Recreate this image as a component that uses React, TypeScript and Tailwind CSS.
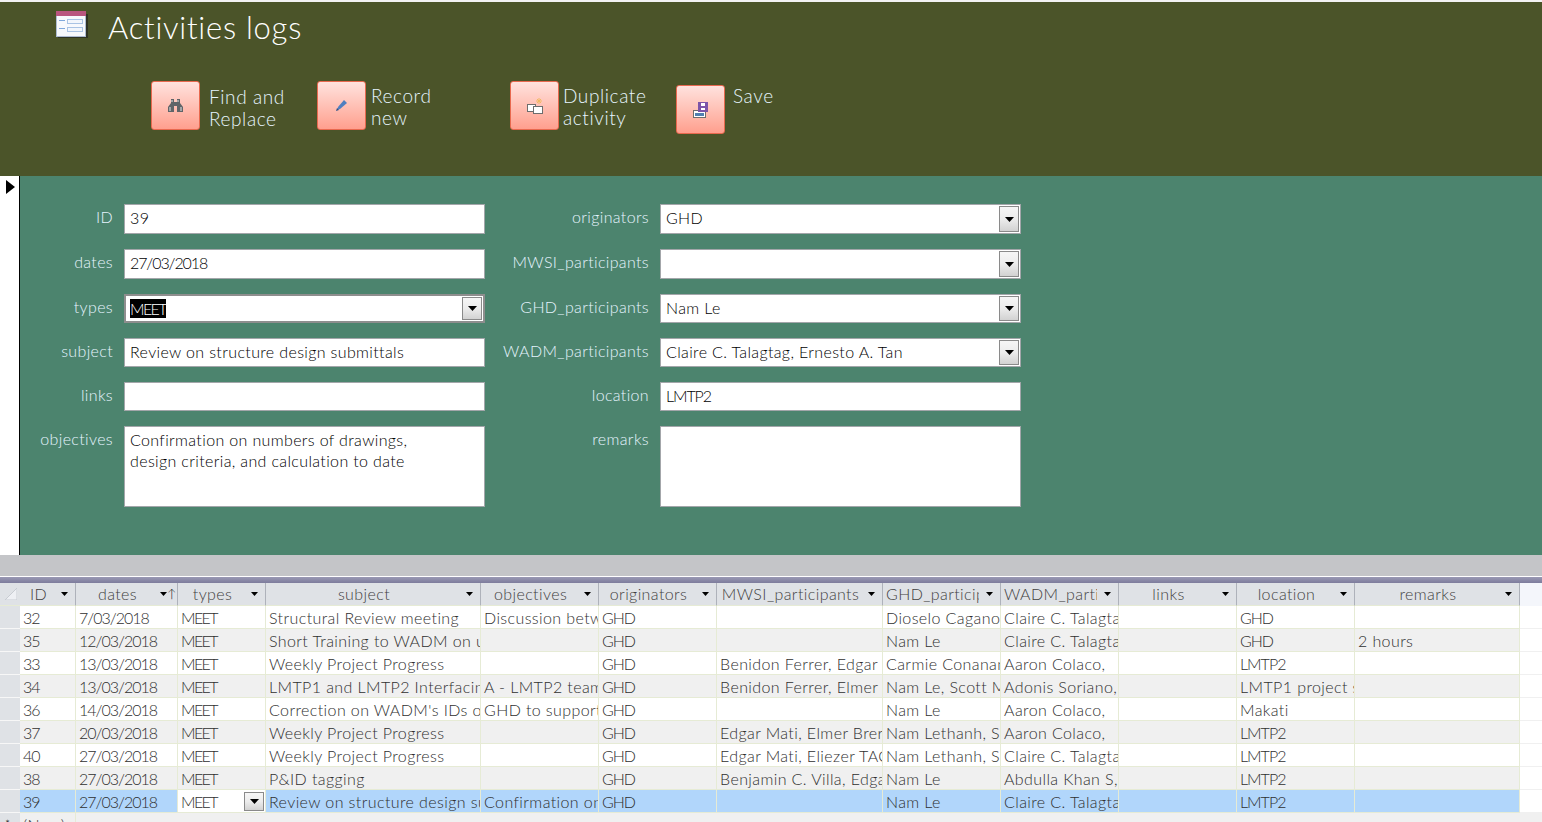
import React from 'react'

const FONT = "font-['Lato','Noto_Sans',sans-serif]"
const ROW = 'grid grid-cols-[20px_56px_102px_88px_215px_118px_118px_166px_118px_118px_118px_118px_165px_22px]'

const Arrow = ({ small }: { small?: boolean }) => (
  <svg width={small ? 7 : 9} height={small ? 4 : 5} viewBox="0 0 8 4" preserveAspectRatio="none" className="shrink-0">
    <path d="M0 0h8L4 4z" fill="#000" />
  </svg>
)

const FormIcon = () => (
  <svg width="32" height="27" viewBox="0 0 32 27">
    <rect x="2" y="3" width="30" height="24" fill="#2f3324" />
    <rect x="0.5" y="1.5" width="29" height="24" fill="#f7f9fd" stroke="#aebcd2" />
    <rect x="0" y="0" width="30" height="5" fill="#b9557f" />
    <path d="M3 9.5h6M3 17.5h6" stroke="#7fa8dc" />
    <rect x="11.5" y="8.5" width="15" height="4" fill="#f2f6fc" stroke="#a9c3e4" />
    <rect x="11.5" y="16.5" width="15" height="4" fill="#f2f6fc" stroke="#a9c3e4" />
  </svg>
)

const Binoculars = () => (
  <svg width="15" height="13" viewBox="0 0 15 13">
    <path d="M3 0h3v3h3V0h3v4l3 4v5h-6V7H6v6H0V8l3-4z" fill="#5f6468" />
    <path d="M4 1v2M10 1v2M2 8v4M13 8v4" stroke="#e6e6e6" />
  </svg>
)

const Pencil = () => (
  <svg width="11" height="11" viewBox="0 0 11 11">
    <path d="M8 0l3 3-7 6-3 1 1-3z" fill="#4f7fc0" />
    <path d="M0 11l1-3 2 2z" fill="#2b4f86" />
  </svg>
)

const Duplicate = () => (
  <svg width="16" height="16" viewBox="0 0 16 16">
    <path d="M12 0v6M9 3h6M10 1l4 4M14 1l-4 4" stroke="#f1b964" />
    <rect x="0.5" y="6.5" width="8" height="7" fill="#fff" stroke="#6d6d6d" />
    <rect x="6.5" y="8.5" width="9" height="7" fill="#fff" stroke="#6d6d6d" />
  </svg>
)

const Save = () => (
  <svg width="16" height="16" viewBox="0 0 16 16">
    <rect x="0.5" y="8.5" width="12" height="7" fill="#fff" stroke="#6d6d6d" />
    <rect x="2" y="11" width="9" height="3" fill="#4f7fb0" />
    <rect x="5" y="0" width="10" height="10" fill="#7c54a8" />
    <rect x="8" y="1" width="4" height="3" fill="#fff" />
    <rect x="8" y="6" width="4" height="2" fill="#fff" />
  </svg>
)

const ActionButton = ({ children }: { children: React.ReactNode }) => (
  <div className="flex h-[49px] w-[49px] shrink-0 items-center justify-center rounded-[3px] border border-[#e8694f] bg-gradient-to-b from-[#ffe2de] to-[#ff9f8e]">
    {children}
  </div>
)

const ComboButton = () => (
  <div className="my-[1px] mr-[1px] flex w-[20px] shrink-0 items-center justify-center border border-[#8a8a8a] bg-gradient-to-b from-[#f6f6f6] via-[#ececec] to-[#d2d2d2]">
    <Arrow />
  </div>
)

type FieldProps = { label: string; value?: string; combo?: boolean; selected?: boolean; tight?: boolean }

const Field = ({ label, value, combo, selected, tight }: FieldProps) => (
  <>
    <label className="pr-[11px] pt-[1px] text-right text-[16px] font-light tracking-[0.35px] text-[#e6f4ff]">{label}</label>
    <div className={`flex border bg-white text-[16px] font-light leading-[21px] text-black ${selected ? 'border-2 border-[#8e8e8e]' : 'border-[#a3a6aa]'}`}>
      <div className={`flex-1 whitespace-pre-line pt-[2px] ${selected ? 'pl-[4px]' : 'pl-[5px]'} ${selected ? 'tracking-[-1.6px]' : tight ? 'tracking-[-1.1px]' : 'tracking-[0.36px]'}`}>
        {selected ? <span className="bg-black text-white">{value}</span> : value}
      </div>
      {combo && <ComboButton />}
    </div>
  </>
)

const columns = ['ID', 'dates', 'types', 'subject', 'objectives', 'originators', 'MWSI_participants', 'GHD_participants', 'WADM_participants', 'links', 'location', 'remarks']

const rows = [
  ['32', '7/03/2018', 'MEET', 'Structural Review meeting', 'Discussion between', 'GHD', '', 'Dioselo Cagano', 'Claire C. Talagtag', '', 'GHD', ''],
  ['35', '12/03/2018', 'MEET', 'Short Training to WADM on use', '', 'GHD', '', 'Nam Le', 'Claire C. Talagtag', '', 'GHD', '2 hours'],
  ['33', '13/03/2018', 'MEET', 'Weekly Project Progress', '', 'GHD', 'Benidon Ferrer, Edgar', 'Carmie Conanan', 'Aaron Colaco,', '', 'LMTP2', ''],
  ['34', '13/03/2018', 'MEET', 'LMTP1 and LMTP2 Interfacing', 'A - LMTP2 team', 'GHD', 'Benidon Ferrer, Elmer Brer', 'Nam Le, Scott Mac', 'Adonis Soriano,', '', 'LMTP1 project site', ''],
  ['36', '14/03/2018', 'MEET', "Correction on WADM's IDs of", 'GHD to support', 'GHD', '', 'Nam Le', 'Aaron Colaco,', '', 'Makati', ''],
  ['37', '20/03/2018', 'MEET', 'Weekly Project Progress', '', 'GHD', 'Edgar Mati, Elmer Brer', 'Nam Lethanh, Scott', 'Aaron Colaco,', '', 'LMTP2', ''],
  ['40', '27/03/2018', 'MEET', 'Weekly Project Progress', '', 'GHD', 'Edgar Mati, Eliezer TAC', 'Nam Lethanh, Scott', 'Claire C. Talagtag', '', 'LMTP2', ''],
  ['38', '27/03/2018', 'MEET', 'P&ID tagging', '', 'GHD', 'Benjamin C. Villa, Edgar', 'Nam Le', 'Abdulla Khan S,', '', 'LMTP2', ''],
  ['39', '27/03/2018', 'MEET', 'Review on structure design submittals', 'Confirmation on numbers', 'GHD', '', 'Nam Le', 'Claire C. Talagtag', '', 'LMTP2', ''],
]

// digits and capitals run narrower in the original face
const cellTracking = (cell: string) => {
  if (cell === 'MEET') return 'tracking-[-1.6px]'
  if (/^[A-Z0-9/]+$/.test(cell)) return 'tracking-[-1px]'
  return ''
}

export default function App() {
  return (
    <div className={`h-[822px] w-[1542px] overflow-hidden bg-white ${FONT}`}>
      <header className="h-[176px] border-t-2 border-[#f2f2f2] bg-[#4b5429] text-[#e6f4ff]">
        <div className="flex items-start pl-[56px] pt-[9px]">
          <FormIcon />
          <h1 className="ml-[20px] -mt-[2px] text-[31px] font-light leading-[36px] tracking-[0.75px] text-white">Activities logs</h1>
        </div>
        <div className="flex items-start pt-[36px] text-[19px] font-light leading-[22px] tracking-[0.6px]">
          <div className="ml-[151px] flex w-[166px] gap-[9px]">
            <ActionButton><Binoculars /></ActionButton>
            <span className="pt-[5px]">Find and<br />Replace</span>
          </div>
          <div className="flex w-[193px] gap-[5px]">
            <ActionButton><Pencil /></ActionButton>
            <span className="pt-[4px]">Record<br />new</span>
          </div>
          <div className="flex w-[166px] gap-[4px]">
            <ActionButton><Duplicate /></ActionButton>
            <span className="pt-[4px]">Duplicate<br />activity</span>
          </div>
          <div className="mt-[4px] flex gap-[8px]">
            <ActionButton><Save /></ActionButton>
            <span>Save</span>
          </div>
        </div>
      </header>

      <section className="flex h-[379px]">
        <div className="w-[20px] shrink-0 border-r border-black bg-white pl-[6px] pt-[4px]">
          <svg width="9" height="14" viewBox="0 0 9 14"><path d="M0 0l9 7-9 7z" fill="#000" /></svg>
        </div>
        <div className="flex-1 bg-[#4c846e] pt-[28px]">
          <div className="grid grid-cols-[104px_361px_175px_361px] grid-rows-[30px_30px_29px_29px_29px_81px] gap-y-[15px]">
            <Field label="ID" value="39" />
            <Field label="originators" value="GHD" combo />
            <Field label="dates" value="27/03/2018" tight />
            <Field label="MWSI_participants" combo />
            <Field label="types" value="MEET" combo selected tight />
            <Field label="GHD_participants" value="Nam Le" combo />
            <Field label="subject" value="Review on structure design submittals" />
            <Field label="WADM_participants" value="Claire C. Talagtag, Ernesto A. Tan" combo />
            <Field label="links" />
            <Field label="location" value="LMTP2" tight />
            <Field label="objectives" value={'Confirmation on numbers of drawings,\ndesign criteria, and calculation to date'} />
            <Field label="remarks" />
          </div>
        </div>
      </section>

      <div className="h-[21px] bg-[#c4c5c8]" />
      <div className="h-px bg-white" />
      <div className="h-[6px] bg-gradient-to-b from-[#9a99b4] to-[#7d7c9c]" />

      <div className="text-[16px] font-light leading-[22px] tracking-[0.4px] text-[#2f2f2f]">
        <div className={`${ROW} h-[23px] bg-[#f4f6fb]`}>
          <div className="relative border-b border-[#e6ebd5] bg-[#dfe2e6]">
            <svg width="12" height="12" viewBox="0 0 12 12" className="absolute left-[5px] top-[5px]"><path d="M12 0v12H0z" fill="#eef0f4" stroke="#c8ccd2" /></svg>
          </div>
          {columns.map((column) => (
            <div key={column} className="flex items-center overflow-hidden border-r border-b border-r-[#aeb2ba] border-b-[#e6ebd5] bg-[#dfe2e6] text-[#3f3f3f]">
              <span className={`min-w-0 flex-1 overflow-hidden whitespace-nowrap ${column === 'GHD_participants' || column === 'WADM_participants' ? 'ml-[3px] mr-[3px] text-left' : 'text-center'}`}>{column}</span>
              <div className="flex w-[18px] shrink-0 items-center justify-center pr-[3px]">
                <Arrow small />
                {column === 'dates' && <span className="-mr-[4px] text-[12px] leading-[12px] text-black">↑</span>}
              </div>
            </div>
          ))}
          <div />
        </div>
        {rows.map((row, rowIndex) => {
          const active = row[0] === '39'
          return (
            <div key={row[0]} className={`${ROW} h-[23px] ${active ? 'bg-[#b1d6fb]' : rowIndex % 2 ? 'bg-[#f0f0f0]' : 'bg-white'}`}>
              <div className="border-b border-[#f7f7f7] bg-[#dfe2e6]" />
              {row.map((cell, cellIndex) => (
                <div key={cellIndex} className={`flex overflow-hidden whitespace-nowrap border-r border-b border-[#e6ebd5] pl-[3px] pt-px ${cellTracking(cell)}`}>
                  {active && cellIndex === 2 ? (
                    <div className="-ml-[3px] -mt-px flex w-[calc(100%+3px)] bg-white pl-[3px] pt-px">
                      <span className="flex-1">{cell}</span>
                      <ComboButton />
                    </div>
                  ) : cell}
                </div>
              ))}
              <div className="border-b border-[#f0f0f0] bg-white" />
            </div>
          )
        })}
        <div className={`${ROW} h-[23px] bg-[#f0f0f0]`}>
          <div className="bg-[#dfe2e6] pl-[5px] pt-[5px] text-[12px] leading-[12px] text-black">*</div>
          <div className="border-r border-[#e6ebd5] pl-[3px] pt-px">(New)</div>
        </div>
      </div>
    </div>
  )
}
